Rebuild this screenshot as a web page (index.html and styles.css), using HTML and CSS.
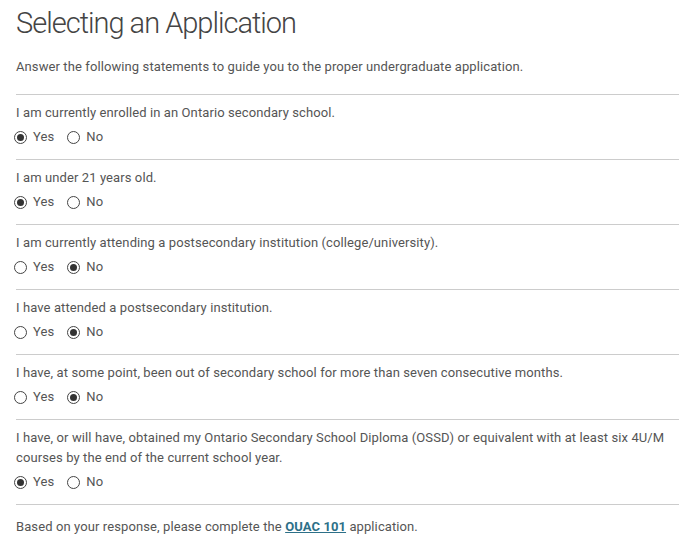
FILE: index.html
```html
<!DOCTYPE html>
<html lang="en">
<head>
<meta charset="utf-8">
<title>Selecting an Application</title>
<link rel="stylesheet" href="styles.css">
</head>
<body>
<main class="page">
  <h1 class="title">Selecting an Application</h1>
  <p class="intro">Answer the following statements to guide you to the proper undergraduate application.</p>

  <div class="question">
    <p class="q-text">I am currently enrolled in an Ontario secondary school.</p>
    <div class="options">
      <span class="opt"><span class="radio checked"></span>Yes</span>
      <span class="opt"><span class="radio"></span>No</span>
    </div>
  </div>

  <div class="question">
    <p class="q-text">I am under 21 years old.</p>
    <div class="options">
      <span class="opt"><span class="radio checked"></span>Yes</span>
      <span class="opt"><span class="radio"></span>No</span>
    </div>
  </div>

  <div class="question">
    <p class="q-text">I am currently attending a postsecondary institution (college/university).</p>
    <div class="options">
      <span class="opt"><span class="radio"></span>Yes</span>
      <span class="opt"><span class="radio checked"></span>No</span>
    </div>
  </div>

  <div class="question">
    <p class="q-text">I have attended a postsecondary institution.</p>
    <div class="options">
      <span class="opt"><span class="radio"></span>Yes</span>
      <span class="opt"><span class="radio checked"></span>No</span>
    </div>
  </div>

  <div class="question">
    <p class="q-text">I have, at some point, been out of secondary school for more than seven consecutive months.</p>
    <div class="options">
      <span class="opt"><span class="radio"></span>Yes</span>
      <span class="opt"><span class="radio checked"></span>No</span>
    </div>
  </div>

  <div class="question">
    <p class="q-text">I have, or will have, obtained my Ontario Secondary School Diploma (OSSD) or equivalent with at least six 4U/M courses by the end of the current school year.</p>
    <div class="options">
      <span class="opt"><span class="radio checked"></span>Yes</span>
      <span class="opt"><span class="radio"></span>No</span>
    </div>
  </div>

  <p class="result">Based on your response, please complete the <a class="app-link" href="#">OUAC 101</a> application.</p>
</main>
</body>
</html>
```

FILE: styles.css
```css
html, body {
  margin: 0;
  padding: 0;
  background: #ffffff;
}

body {
  font-family: Roboto, "Liberation Sans", Arial, sans-serif;
  font-size: 13px;
  line-height: 20px;
  letter-spacing: 0.1px;
  color: #555555;
}

.page {
  padding-left: 16px;
}

.title {
  margin: 5px 0 0;
  font-size: 29px;
  line-height: 36px;
  font-weight: 300;
  letter-spacing: -1px;
  color: #444444;
}

.intro {
  margin: 16px 0 17px;
}

.question {
  border-top: 1px solid #cccccc;
  padding: 8px 0 12px;
}

.q-text {
  margin: 0;
}

.options {
  margin-top: 4px;
  display: flex;
  gap: 13px;
  margin-left: -2px;
}

.opt {
  display: inline-flex;
  align-items: center;
  gap: 6px;
}

.radio {
  width: 13px;
  height: 13px;
  box-sizing: border-box;
  border: 1px solid #444444;
  border-radius: 50%;
  display: inline-flex;
  align-items: center;
  justify-content: center;
}

.radio.checked::after {
  content: "";
  width: 7px;
  height: 7px;
  border-radius: 50%;
  background: #333333;
}

.result {
  margin: 0;
  border-top: 1px solid #cccccc;
  padding-top: 12px;
}

.app-link {
  color: #2d7088;
  font-weight: 700;
  text-decoration: underline;
}
```
